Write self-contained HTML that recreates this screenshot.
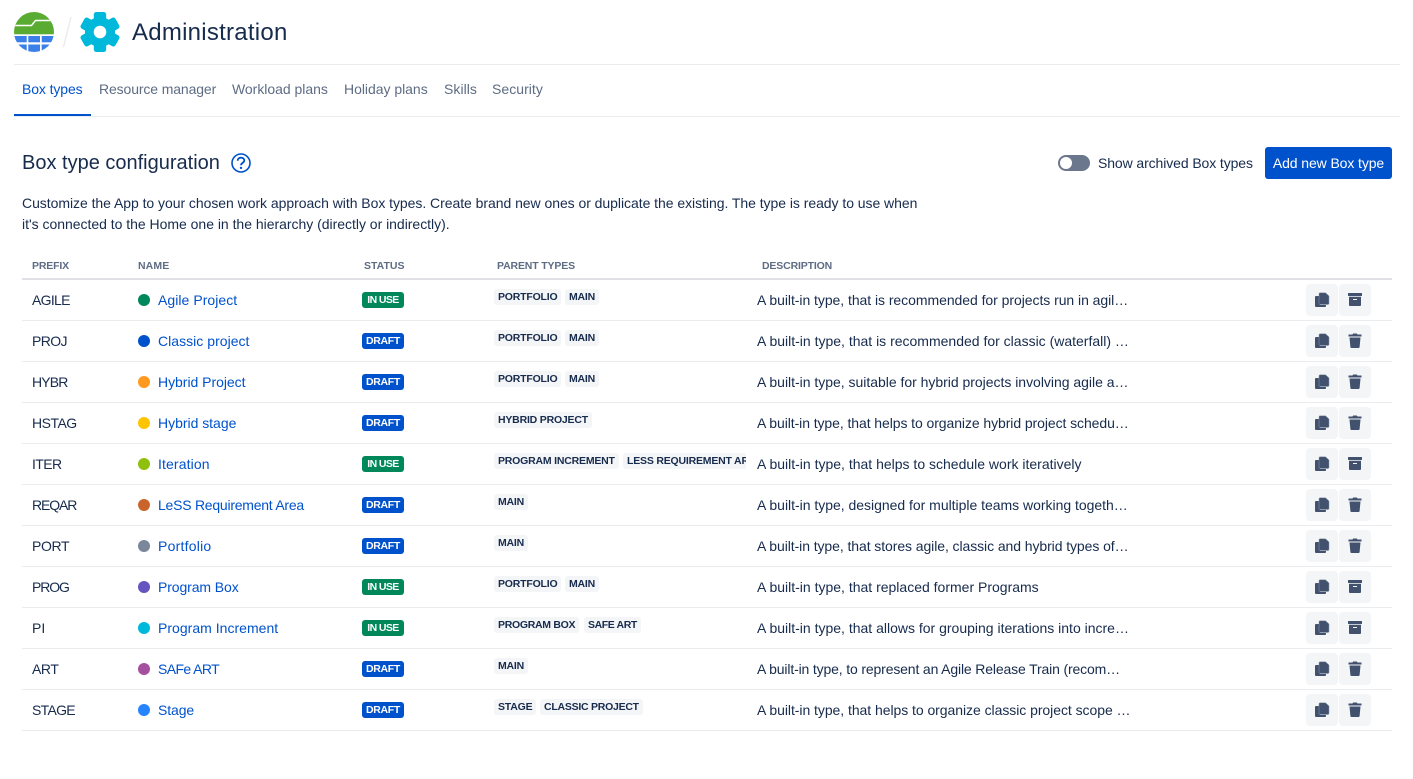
<!DOCTYPE html>
<html lang="en"><head><meta charset="utf-8"><title>Administration</title>
<style>
html,body{margin:0;padding:0;background:#fff}
body{width:1413px;height:779px;position:relative;overflow:hidden;font-family:"Liberation Sans",Arial,sans-serif;font-size:14px;color:#172b4d}
.a{position:absolute;white-space:nowrap}
.tab{position:absolute;top:79px;line-height:20px;color:#5e6c84;white-space:nowrap;letter-spacing:-.09px}
.th{position:absolute;top:259px;line-height:14px;font-size:10.5px;font-weight:bold;color:#5e6c84;white-space:nowrap}
.row{position:absolute;left:22px;width:1370px;height:40px;border-bottom:1px solid #ebecf0}
.row>*{position:absolute;white-space:nowrap}
.p{left:10px;top:10px;line-height:20px}
.d{left:116px;top:14px;width:12px;height:12px;border-radius:50%}
.n{left:136px;top:10px;line-height:20px;color:#0052cc;text-decoration:none}
.s{left:340px;top:12px;height:16px;line-height:17px;width:42px;border-radius:3px;color:#fff;font-size:10.5px;font-weight:bold;text-align:center}
.u{background:#00875a;letter-spacing:-.6px}.f{background:#0052cc;letter-spacing:-.3px}
.ps{left:472px;top:9px;width:252px;height:16px;overflow:hidden}
.c{position:absolute;top:0;height:16px;line-height:17px;background:#f4f5f7;border-radius:3px;padding:0 4px;font-size:10.5px;font-weight:bold;color:#172b4d;white-space:nowrap;letter-spacing:-.2px}
.t{left:735px;top:10px;line-height:20px}
.b{top:4px;width:32px;height:32px;border-radius:4px;background:#f4f5f7}
.b svg{position:absolute;left:0;top:0}
.b1{left:1284px}.b2{left:1317px}
</style></head>
<body>
<svg class="a" style="left:0;top:0" width="130" height="64" viewBox="0 0 130 64">
<defs><clipPath id="lc"><circle cx="34" cy="32" r="20"/></clipPath></defs>
<g clip-path="url(#lc)">
<rect x="14" y="12" width="40" height="22.300" fill="#5aab32"/>
<path d="M14 25.500H31.500L35.500 20.500H54" fill="none" stroke="#fff" stroke-width="1.500"/>
<g fill="#3b7fe8">
<rect x="14" y="36" width="12.700" height="6.300"/><rect x="28.300" y="36" width="11.700" height="6.300"/><rect x="41.700" y="36" width="12.700" height="6.300"/>
<rect x="14" y="44.500" width="12.700" height="8"/><rect x="28.300" y="44.500" width="11.700" height="8"/><rect x="41.700" y="44.500" width="12.700" height="8"/>
</g></g>
<path d="M71 17L63.500 47" stroke="#ebecf0" stroke-width="1.500"/>
<g fill="#00b8d9" transform="translate(100 32)">
<circle r="15"/>
<rect x="-6.200" y="-20" width="12.400" height="40" rx="2.500"/>
<rect x="-6.200" y="-20" width="12.400" height="40" rx="2.500" transform="rotate(60)"/>
<rect x="-6.200" y="-20" width="12.400" height="40" rx="2.500" transform="rotate(120)"/>
<circle r="6.300" fill="#fff"/>
</g>
</svg>
<div class="a" style="left:132px;top:18px;font-size:24px;line-height:30px;letter-spacing:.25px">Administration</div>
<div class="a" style="left:14px;top:64px;width:1386px;height:1px;background:#ebecf0"></div>

<div class="tab" style="left:22px;color:#0052cc;letter-spacing:-.1px">Box types</div>
<div class="tab" style="left:99px;letter-spacing:-.12px">Resource manager</div>
<div class="tab" style="left:232px;letter-spacing:-.03px">Workload plans</div>
<div class="tab" style="left:344px;letter-spacing:-.03px">Holiday plans</div>
<div class="tab" style="left:444px;letter-spacing:.05px">Skills</div>
<div class="tab" style="left:492px;letter-spacing:.04px">Security</div>
<div class="a" style="left:14px;top:116px;width:1386px;height:1px;background:#ebecf0"></div>
<div class="a" style="left:14px;top:114px;width:77px;height:2px;background:#0052cc"></div>

<div class="a" style="left:22px;top:150px;font-size:20px;line-height:26px;letter-spacing:0">Box type configuration</div>
<svg class="a" style="left:230px;top:152px" width="22" height="22" viewBox="0 0 22 22"><circle cx="11" cy="11" r="9" fill="none" stroke="#0052cc" stroke-width="1.600"/><path d="M7.700 8.700c0-1.900 1.400-3 3.300-3s3.300 1.100 3.300 2.800c0 2.400-3.300 2.400-3.300 4.800" fill="none" stroke="#0052cc" stroke-width="1.800"/><circle cx="11" cy="15.900" r="1.200" fill="#0052cc"/></svg>

<div class="a" style="left:1058px;top:155px;width:32px;height:16px;border-radius:8px;background:#6b778c"></div>
<div class="a" style="left:1060px;top:157px;width:12px;height:12px;border-radius:50%;background:#fff"></div>
<div class="a" style="left:1098px;top:153px;line-height:20px;letter-spacing:-.1px">Show archived Box types</div>
<div class="a" style="left:1265px;top:147px;width:127px;height:32px;line-height:32px;background:#0052cc;border-radius:3px;color:#fff;text-align:center;letter-spacing:-.1px">Add new Box type</div>

<div class="a" style="left:22px;top:193px;line-height:21px;letter-spacing:-.045px">Customize the App to your chosen work approach with Box types. Create brand new ones or duplicate the existing. The type is ready to use when</div>
<div class="a" style="left:22px;top:214px;line-height:21px;letter-spacing:-.02px">it's connected to the Home one in the hierarchy (directly or indirectly).</div>

<div class="th" style="left:32px;letter-spacing:-.15px">PREFIX</div>
<div class="th" style="left:138px;letter-spacing:.1px">NAME</div>
<div class="th" style="left:364px">STATUS</div>
<div class="th" style="left:497px;letter-spacing:-.15px">PARENT TYPES</div>
<div class="th" style="left:762px;letter-spacing:-.15px">DESCRIPTION</div>
<div class="a" style="left:22px;top:278px;width:1370px;height:2px;background:#dfe1e6"></div>

<svg width="0" height="0" style="position:absolute"><defs>
<symbol id="cp" viewBox="0 0 32 32"><path fill="#42526e" d="M9 13a1 1 0 0 1 1-1h4v9h6v1a1 1 0 0 1-1 1H10a1 1 0 0 1-1-1z"/><path fill="#42526e" stroke="#8a97ab" stroke-width=".5" d="M14 8.800h5.500L23 12V19.500a1 1 0 0 1-1 1h-8a1 1 0 0 1-1-1V9.800a1 1 0 0 1 1-1z"/></symbol>
<symbol id="ar" viewBox="0 0 32 32"><rect x="9" y="9" width="14" height="3" rx=".5" fill="#42526e"/><path fill="#42526e" fill-rule="evenodd" d="M10 12.800h12V21a1 1 0 0 1-1 1H11a1 1 0 0 1-1-1zM14 15v1h4v-1z"/></symbol>
<symbol id="tr" viewBox="0 0 32 32"><path fill="#42526e" d="M13.500 9.500l.7-1h3.600l.7 1H22.500V11.500H9.500V9.500zM10.500 12.500h11l-.9 9.600a1 1 0 0 1-1 .9h-7.200a1 1 0 0 1-1-.9z"/></symbol>
</defs></svg>

<div class="row" style="top:280px"><span class="p" style="letter-spacing:-.7px">AGILE</span><i class="d" style="background:#00875a"></i><a class="n" style="letter-spacing:.05px">Agile Project</a><span class="s u">IN USE</span><div class="ps"><span class="c" style="left:0">PORTFOLIO</span><span class="c" style="left:71px">MAIN</span></div><span class="t" style="letter-spacing:-.05px">A built-in type, that is recommended for projects run in agil…</span><div class="b b1"><svg width="32" height="32"><use href="#cp"/></svg></div><div class="b b2"><svg width="32" height="32"><use href="#ar"/></svg></div></div>
<div class="row" style="top:321px"><span class="p" style="letter-spacing:-.6px">PROJ</span><i class="d" style="background:#0052cc"></i><a class="n" style="letter-spacing:.03px">Classic project</a><span class="s f">DRAFT</span><div class="ps"><span class="c" style="left:0">PORTFOLIO</span><span class="c" style="left:71px">MAIN</span></div><span class="t" style="letter-spacing:0">A built-in type, that is recommended for classic (waterfall) …</span><div class="b b1"><svg width="32" height="32"><use href="#cp"/></svg></div><div class="b b2"><svg width="32" height="32"><use href="#tr"/></svg></div></div>
<div class="row" style="top:362px"><span class="p" style="letter-spacing:-.85px">HYBR</span><i class="d" style="background:#ff991f"></i><a class="n" style="letter-spacing:-.03px">Hybrid Project</a><span class="s f">DRAFT</span><div class="ps"><span class="c" style="left:0">PORTFOLIO</span><span class="c" style="left:71px">MAIN</span></div><span class="t" style="letter-spacing:-.02px">A built-in type, suitable for hybrid projects involving agile a…</span><div class="b b1"><svg width="32" height="32"><use href="#cp"/></svg></div><div class="b b2"><svg width="32" height="32"><use href="#tr"/></svg></div></div>
<div class="row" style="top:403px"><span class="p" style="letter-spacing:-.5px">HSTAG</span><i class="d" style="background:#ffc400"></i><a class="n" style="letter-spacing:-.02px">Hybrid stage</a><span class="s f">DRAFT</span><div class="ps"><span class="c" style="left:0">HYBRID PROJECT</span></div><span class="t" style="letter-spacing:-.08px">A built-in type, that helps to organize hybrid project schedu…</span><div class="b b1"><svg width="32" height="32"><use href="#cp"/></svg></div><div class="b b2"><svg width="32" height="32"><use href="#tr"/></svg></div></div>
<div class="row" style="top:444px"><span class="p" style="letter-spacing:-.6px">ITER</span><i class="d" style="background:#8fbf0f"></i><a class="n" style="letter-spacing:.12px">Iteration</a><span class="s u">IN USE</span><div class="ps"><span class="c" style="left:0">PROGRAM INCREMENT</span><span class="c" style="left:129px">LESS REQUIREMENT AREA</span></div><span class="t" style="letter-spacing:0">A built-in type, that helps to schedule work iteratively</span><div class="b b1"><svg width="32" height="32"><use href="#cp"/></svg></div><div class="b b2"><svg width="32" height="32"><use href="#ar"/></svg></div></div>
<div class="row" style="top:485px"><span class="p" style="letter-spacing:-1.1px">REQAR</span><i class="d" style="background:#c9652b"></i><a class="n" style="letter-spacing:-.24px">LeSS Requirement Area</a><span class="s f">DRAFT</span><div class="ps"><span class="c" style="left:0">MAIN</span></div><span class="t" style="letter-spacing:-.02px">A built-in type, designed for multiple teams working togeth…</span><div class="b b1"><svg width="32" height="32"><use href="#cp"/></svg></div><div class="b b2"><svg width="32" height="32"><use href="#tr"/></svg></div></div>
<div class="row" style="top:526px"><span class="p" style="letter-spacing:-.35px">PORT</span><i class="d" style="background:#7a869a"></i><a class="n" style="letter-spacing:.23px">Portfolio</a><span class="s f">DRAFT</span><div class="ps"><span class="c" style="left:0">MAIN</span></div><span class="t" style="letter-spacing:-.08px">A built-in type, that stores agile, classic and hybrid types of…</span><div class="b b1"><svg width="32" height="32"><use href="#cp"/></svg></div><div class="b b2"><svg width="32" height="32"><use href="#tr"/></svg></div></div>
<div class="row" style="top:567px"><span class="p" style="letter-spacing:-1.1px">PROG</span><i class="d" style="background:#6554c0"></i><a class="n" style="letter-spacing:-.1px">Program Box</a><span class="s u">IN USE</span><div class="ps"><span class="c" style="left:0">PORTFOLIO</span><span class="c" style="left:71px">MAIN</span></div><span class="t" style="letter-spacing:0">A built-in type, that replaced former Programs</span><div class="b b1"><svg width="32" height="32"><use href="#cp"/></svg></div><div class="b b2"><svg width="32" height="32"><use href="#ar"/></svg></div></div>
<div class="row" style="top:608px"><span class="p">PI</span><i class="d" style="background:#00b8d9"></i><a class="n" style="letter-spacing:.02px">Program Increment</a><span class="s u">IN USE</span><div class="ps"><span class="c" style="left:0;letter-spacing:-.3px">PROGRAM BOX</span><span class="c" style="left:90px;letter-spacing:-.4px">SAFE ART</span></div><span class="t" style="letter-spacing:0">A built-in type, that allows for grouping iterations into incre…</span><div class="b b1"><svg width="32" height="32"><use href="#cp"/></svg></div><div class="b b2"><svg width="32" height="32"><use href="#ar"/></svg></div></div>
<div class="row" style="top:649px"><span class="p" style="letter-spacing:-.43px">ART</span><i class="d" style="background:#a54f9f"></i><a class="n" style="letter-spacing:-.6px">SAFe ART</a><span class="s f">DRAFT</span><div class="ps"><span class="c" style="left:0">MAIN</span></div><span class="t" style="letter-spacing:-.15px">A built-in type, to represent an Agile Release Train (recom…</span><div class="b b1"><svg width="32" height="32"><use href="#cp"/></svg></div><div class="b b2"><svg width="32" height="32"><use href="#tr"/></svg></div></div>
<div class="row" style="top:690px"><span class="p" style="letter-spacing:-.7px">STAGE</span><i class="d" style="background:#2684ff"></i><a class="n" style="letter-spacing:-.1px">Stage</a><span class="s f">DRAFT</span><div class="ps"><span class="c" style="left:0">STAGE</span><span class="c" style="left:46px;letter-spacing:-.25px">CLASSIC PROJECT</span></div><span class="t" style="letter-spacing:-.05px">A built-in type, that helps to organize classic project scope …</span><div class="b b1"><svg width="32" height="32"><use href="#cp"/></svg></div><div class="b b2"><svg width="32" height="32"><use href="#tr"/></svg></div></div>
</body></html>
